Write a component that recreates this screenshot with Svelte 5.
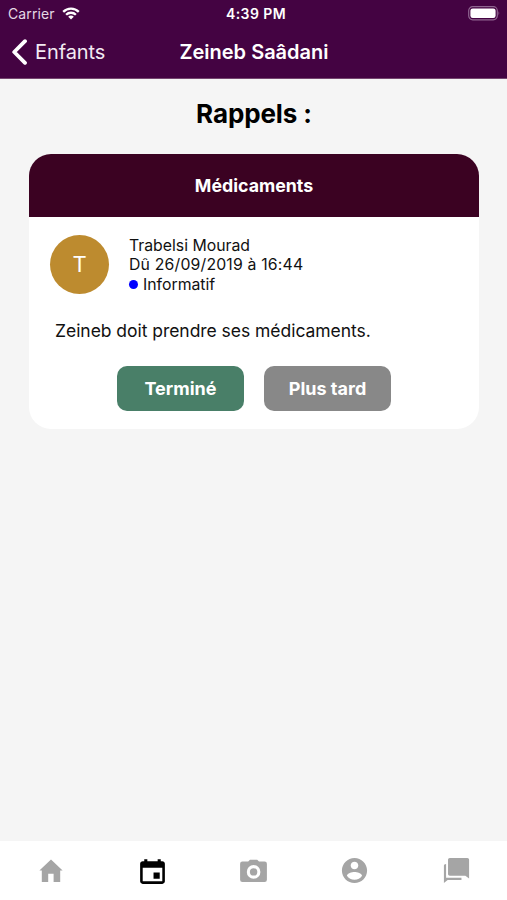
<script>
  const tabs = [
    { id: 'home', label: 'Accueil' },
    { id: 'calendar', label: 'Rappels' },
    { id: 'camera', label: 'Photos' },
    { id: 'contact', label: 'Profil' },
    { id: 'chat', label: 'Messages' },
  ];

  let active = 'calendar';

  const reminder = {
    title: 'Médicaments',
    author: 'Trabelsi Mourad',
    due: 'Dû 26/09/2019 à 16:44',
    level: 'Informatif',
    message: 'Zeineb doit prendre ses médicaments.',
  };
</script>

<div class="screen">
  <header>
    <div class="status-bar">
      <div class="carrier">
        <span>Carrier</span>
        <svg width="18" height="13" viewBox="0 0 18 13">
          <path d="M1.2 4.9 A11 11 0 0 1 16.8 4.9" />
          <path d="M4.1 7.8 A6.9 6.9 0 0 1 13.9 7.8" />
          <path class="fill" d="M9 12.6 L6.2 9.8 A3.9 3.9 0 0 1 11.8 9.8 Z" />
        </svg>
      </div>
      <span class="time">4:39 PM</span>
      <svg class="battery" width="33" height="15" viewBox="0 0 33 15">
        <rect class="shell" x="0.7" y="0.7" width="28.6" height="13.1" rx="4" />
        <rect class="level" x="2.4" y="2.4" width="25.2" height="9.7" rx="2.3" />
        <path class="cap" d="M30.5 5 Q32.3 7.2 30.5 9.5 Z" />
      </svg>
    </div>
    <nav class="nav-bar">
      <button class="back">
        <svg width="17" height="26" viewBox="0 0 17 26">
          <path d="M14 2.2 L3.2 13 L14 23.8" />
        </svg>
        <span>Enfants</span>
      </button>
      <span class="nav-title">Zeineb Saâdani</span>
    </nav>
  </header>

  <main>
    <h1>Rappels :</h1>
    <section class="card">
      <div class="card-header">{reminder.title}</div>
      <div class="author">
        <div class="avatar">{reminder.author[0]}</div>
        <div class="details">
          <div class="name">{reminder.author}</div>
          <div class="due">{reminder.due}</div>
          <div class="info"><span class="dot"></span>{reminder.level}</div>
        </div>
      </div>
      <p>{reminder.message}</p>
      <div class="actions">
        <button class="done">Terminé</button>
        <button class="later">Plus tard</button>
      </div>
    </section>
  </main>

  <footer>
    {#each tabs as tab}
      <button
        class="tab"
        class:active={tab.id === active}
        aria-label={tab.label}
        on:click={() => (active = tab.id)}
      >
        {#if tab.id === 'home'}
          <svg width="30" height="30" viewBox="0 0 30 30">
            <path d="M15 3.4L3.4 14.4H5.8V26h6.4v-8.2h5.4V26h6.6V14.4h2.4z" />
          </svg>
        {:else if tab.id === 'calendar'}
          <svg width="33" height="33" viewBox="0 0 512 512">
            <path d="M368 272h-96v96h96v-96zM336 64v32H176V64h-48v32h-24c-22 0-40 18-40 40v272c0 22 18 40 40 40h304c22 0 40-18 40-40V136c0-22-18-40-40-40h-24V64h-48zm72 344H104V196h304v212z" />
          </svg>
        {:else if tab.id === 'camera'}
          <svg width="33" height="30" viewBox="0 0 33 30">
            <circle cx="16.6" cy="15.9" r="3.7" />
            <path fill-rule="evenodd" d="M13 3.7L11.2 5.4H5.4Q3.1 5.4 3.1 7.7V23.8Q3.1 26.1 5.4 26.1H27.6Q29.9 26.1 29.9 23.8V7.7Q29.9 5.4 27.6 5.4H22L20.2 3.7ZM16.6 9.1a6.8 6.8 0 1 0 0 13.6a6.8 6.8 0 1 0 0-13.6z" />
          </svg>
        {:else if tab.id === 'contact'}
          <svg width="31" height="31" viewBox="0 0 512 512">
            <path d="M256 48C142 48 48 142 48 256s94 208 208 208 208-94 208-208S370 48 256 48zm0 62c35 0 63 28 63 63s-28 63-63 63-63-28-63-63 28-63 63-63zm0 300c-52 0-98-27-125-67 1-41 83-64 125-64s124 23 125 64c-27 40-73 67-125 67z" />
          </svg>
        {:else}
          <svg width="31" height="31" viewBox="0 0 512 512">
            <path d="M145 48h290c16 0 29 13 29 29v310l-62-43H145c-16 0-29-13-29-29V77c0-16 13-29 29-29zM84 150v226h254v35H110l-62 53V179c0-16 13-29 36-29z" />
          </svg>
        {/if}
      </button>
    {/each}
  </footer>
</div>

<style>
  :global(body) {
    margin: 0;
  }

  .screen {
    display: flex;
    flex-direction: column;
    height: 900px;
    background: #f5f5f5;
    font-family: Inter, 'Liberation Sans', sans-serif;
    color: #111;
  }

  button {
    border: none;
    padding: 0;
    background: none;
    font-family: inherit;
    cursor: pointer;
  }

  header {
    box-sizing: border-box;
    height: 79px;
    background: #440342;
    border-bottom: 1px solid #75466f;
    color: #fff;
  }

  .status-bar {
    display: grid;
    grid-template-columns: 1fr auto 1fr;
    align-items: center;
    height: 27px;
    padding: 0 6px 0 8px;
    font-size: 14px;
  }

  .carrier {
    display: flex;
    align-items: center;
    gap: 7px;
    color: #e5d9e5;
    letter-spacing: 0.1px;
  }

  .carrier path {
    fill: none;
    stroke: #fff;
    stroke-width: 2.3;
  }

  .carrier .fill {
    fill: #fff;
    stroke: none;
  }

  .time {
    padding-left: 3px;
    font-size: 14px;
    font-weight: 600;
    letter-spacing: 0.4px;
  }

  .battery {
    justify-self: end;
  }

  .shell {
    fill: none;
    stroke: #8f6590;
    stroke-width: 1.2;
  }

  .level {
    fill: #fff;
  }

  .cap {
    fill: #8f6590;
  }

  .nav-bar {
    display: grid;
    grid-template-columns: 1fr auto 1fr;
    align-items: center;
    height: 50px;
  }

  .back {
    display: flex;
    align-items: center;
    gap: 7px;
    padding-left: 11px;
    color: #f3eaf3;
    font-size: 20px;
    letter-spacing: -0.1px;
  }

  .back path {
    fill: none;
    stroke: #fff;
    stroke-width: 3.8;
    stroke-linecap: round;
    stroke-linejoin: round;
  }

  .nav-title {
    padding-left: 1px;
    font-size: 20px;
    font-weight: 600;
  }

  main {
    flex: 1;
    padding: 0 28px 0 29px;
  }

  h1 {
    margin: 0;
    padding: 17px 0 22px;
    font-size: 26px;
    line-height: 36px;
    font-weight: 700;
    letter-spacing: -0.1px;
    text-align: center;
    color: #000;
  }

  .card {
    height: 275px;
    border-radius: 22px;
    overflow: hidden;
    background: #fff;
  }

  .card-header {
    height: 63px;
    line-height: 63px;
    background: #3b0222;
    color: #fff;
    font-size: 17.8px;
    font-weight: 700;
    text-align: center;
  }

  .author {
    display: flex;
    gap: 20px;
    padding: 18px 21px 0;
  }

  .avatar {
    width: 59px;
    height: 59px;
    border-radius: 50%;
    background: #bd8b2f;
    color: #fff;
    font-size: 22px;
    line-height: 59px;
    text-align: center;
  }

  .details {
    height: 59px;
    padding-top: 0.6px;
    box-sizing: border-box;
    font-size: 15.8px;
    line-height: 19.6px;
  }

  .due {
    letter-spacing: 0.18px;
  }

  .info {
    display: flex;
    align-items: center;
  }

  .dot {
    width: 9px;
    height: 9px;
    margin-right: 5px;
    border-radius: 50%;
    background: #00f;
  }

  p {
    margin: 25px 26px 24px;
    font-size: 17.5px;
    line-height: 23px;
    letter-spacing: -0.04px;
  }

  .actions {
    display: flex;
    justify-content: center;
    gap: 20px;
  }

  .actions button {
    width: 127px;
    height: 45px;
    border-radius: 10px;
    color: #fff;
    font-size: 18px;
    font-weight: 700;
  }

  .done {
    background: #497f68;
  }

  .later {
    background: #888;
  }

  footer {
    display: flex;
    height: 59px;
    background: #fff;
  }

  .tab {
    display: flex;
    flex: 1;
    align-items: center;
    justify-content: center;
  }

  .tab svg {
    fill: #a5a5a5;
  }

  .tab.active {
    padding-top: 2px;
  }

  .tab.active svg {
    fill: #000;
  }
</style>
